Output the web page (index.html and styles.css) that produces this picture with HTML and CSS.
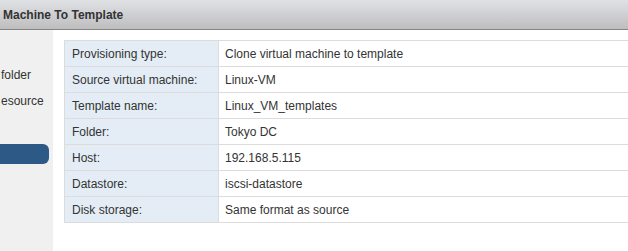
FILE: index.html
```html
<!DOCTYPE html>
<html lang="en">
<head>
    <meta charset="UTF-8">
    <title>Clone Virtual Machine To Template</title>
    <link rel="stylesheet" href="styles.css">
</head>
<body>
    <div class="wizard">
        <header class="wizard-header">
            <h1 class="wizard-title">Machine To Template</h1>
        </header>

        <div class="wizard-body">
            <!-- Steps list (cut off on the left) -->
            <nav class="steps">
                <div class="step">folder</div>
                <div class="step">esource</div>
                <div class="step step-gap"></div>
                <div class="step step-active"></div>
            </nav>

            <main class="summary">
                <table class="summary-table">
                    <tr><td class="label">Provisioning type:</td><td class="value">Clone virtual machine to template</td></tr>
                    <tr><td class="label">Source virtual machine:</td><td class="value">Linux-VM</td></tr>
                    <tr><td class="label">Template name:</td><td class="value">Linux_VM_templates</td></tr>
                    <tr><td class="label">Folder:</td><td class="value">Tokyo DC</td></tr>
                    <tr><td class="label">Host:</td><td class="value">192.168.5.115</td></tr>
                    <tr><td class="label">Datastore:</td><td class="value">iscsi-datastore</td></tr>
                    <tr><td class="label">Disk storage:</td><td class="value">Same format as source</td></tr>
                </table>
            </main>
        </div>
    </div>
</body>
</html>
```

FILE: styles.css
```css
:root {
    --text-dark: #333;
    --border-color: #dcdcdc;
    --label-bg: #e4edf5;
    --sidebar-bg: #f0f0f0;
    --active-blue: #2d5986;
}

* {
    margin: 0;
    padding: 0;
    box-sizing: border-box;
}

body {
    font-family: "Liberation Sans", Arial, sans-serif;
    font-size: 12px;
    color: var(--text-dark);
    background-color: #fff;
    overflow: hidden;
}

.wizard {
    display: flex;
    flex-direction: column;
    height: 100vh;
}

.wizard-header {
    height: 30px;
    background: linear-gradient(to bottom, #e0e1e5, #bebebf);
    border-bottom: 1px solid #858585;
    display: flex;
    align-items: center;
    padding-left: 3px;
}

.wizard-title {
    font-size: 12px;
    font-weight: 700;
    color: #333;
}

.wizard-body {
    flex: 1;
    display: flex;
}

/* Left step list */
.steps {
    width: 53px;
    background-color: var(--sidebar-bg);
    padding-top: 32px;
    display: flex;
    flex-direction: column;
    overflow: hidden;
    white-space: nowrap;
}

.step {
    height: 26px;
    line-height: 26px;
    padding-left: 1px;
}

.step-gap {
    height: 30px;
}

.step-active {
    height: 20px;
    width: 49px;
    background-color: var(--active-blue);
    border-radius: 0 6px 6px 0;
}

/* Summary table */
.summary {
    flex: 1;
    padding: 10px 0 0 11px;
}

.summary-table {
    width: 100%;
    border-collapse: collapse;
    border-top: 1px solid var(--border-color);
    border-left: 1px solid var(--border-color);
}

.summary-table td {
    height: 26px;
    border-bottom: 1px solid var(--border-color);
    vertical-align: middle;
}

.label {
    width: 154px;
    padding-left: 7px;
    background-color: var(--label-bg);
    border-right: 1px solid var(--border-color);
}

.value {
    padding-left: 6px;
}
```
